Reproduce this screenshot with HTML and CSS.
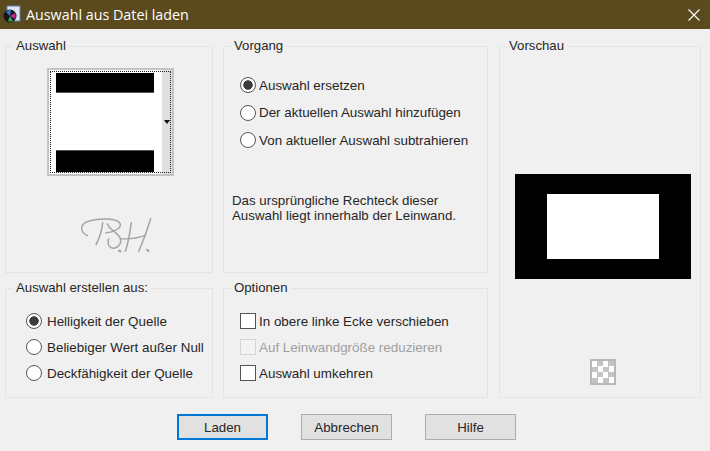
FILE: index.html
```html
<!DOCTYPE html>
<html lang="de">
<head>
<meta charset="utf-8">
<title>Auswahl aus Datei laden</title>
<link rel="stylesheet" href="styles.css">
</head>
<body>
<div class="dialog">
  <header class="titlebar">
    <svg class="app-icon" width="20" height="20" viewBox="0 0 20 20">
      <rect x="5" y="1" width="13" height="15" fill="#dfe8f2" stroke="#5b7fb0"/>
      <circle cx="8" cy="11" r="6.5" fill="#15151c"/>
      <path d="M8 11 L4 7 A6 6 0 0 1 9 5Z" fill="#2f7fd0"/>
      <path d="M8 11 L13 8 A6 6 0 0 1 13 14Z" fill="#c02a8a"/>
      <path d="M8 11 L6 16 A6 6 0 0 0 11 16Z" fill="#2fa84a"/>
    </svg>
    <span class="title-text">Auswahl aus Datei laden</span>
    <svg class="close-icon" width="12" height="12" viewBox="0 0 12 12"><path d="M.5.5l11 11M11.5.5l-11 11" stroke="#fff" stroke-width="1.1" fill="none"/></svg>
  </header>
  <main class="content">
    <div class="columns">
      <fieldset class="group source">
        <legend>Auswahl</legend>
        <div class="picker">
          <div class="picker-image">
            <div class="bar"></div>
            <div class="bar"></div>
          </div>
          <div class="picker-strip"><span class="arrow"></span></div>
        </div>
        <svg class="signature" width="90" height="50" viewBox="0 0 270 150" fill="none" stroke="#a4a4a4" stroke-width="4.4" stroke-linecap="round">
          <path d="M52 95C28 82 28 58 60 50C92 42 140 42 150 58C156 70 136 84 108 86"/>
          <path d="M98 56C96 78 90 100 78 122"/>
          <path d="M112 60C118 78 150 88 152 106C154 124 136 138 122 130C114 124 112 116 116 104"/>
          <path d="M184 56C180 86 176 114 166 142"/>
          <path d="M242 44C232 76 220 110 206 142"/>
          <path d="M150 104C176 106 204 102 226 94"/>
          <path d="M148 140l3 2M232 138l3 3" stroke-width="7"/>
        </svg>
      </fieldset>
      <fieldset class="group action">
        <legend>Vorgang</legend>
        <div class="options options-wide">
          <label class="choice"><span class="radio checked"></span>Auswahl ersetzen</label>
          <label class="choice"><span class="radio"></span>Der aktuellen Auswahl hinzufügen</label>
          <label class="choice"><span class="radio"></span>Von aktueller Auswahl subtrahieren</label>
        </div>
        <p class="note">Das ursprüngliche Rechteck dieser<br>Auswahl liegt innerhalb der Leinwand.</p>
      </fieldset>
      <fieldset class="group preview">
        <legend>Vorschau</legend>
        <div class="preview-canvas"><div class="preview-hole"></div></div>
        <div class="checker"></div>
      </fieldset>
      <fieldset class="group create">
        <legend>Auswahl erstellen aus:</legend>
        <div class="options options-tight">
          <label class="choice"><span class="radio checked"></span>Helligkeit der Quelle</label>
          <label class="choice"><span class="radio"></span>Beliebiger Wert außer Null</label>
          <label class="choice"><span class="radio"></span>Deckfähigkeit der Quelle</label>
        </div>
      </fieldset>
      <fieldset class="group opts">
        <legend>Optionen</legend>
        <div class="options options-boxes">
          <label class="choice"><span class="check"></span>In obere linke Ecke verschieben</label>
          <label class="choice disabled"><span class="check"></span>Auf Leinwandgröße reduzieren</label>
          <label class="choice"><span class="check"></span>Auswahl umkehren</label>
        </div>
      </fieldset>
    </div>
    <div class="buttons">
      <button class="btn default" type="button">Laden</button>
      <button class="btn" type="button">Abbrechen</button>
      <button class="btn" type="button">Hilfe</button>
    </div>
  </main>
</div>
</body>
</html>
```
FILE: styles.css
```css
* { box-sizing: border-box; }
html, body { margin: 0; height: 100%; }
body { background: #f0f0f0; font-family: "Liberation Sans", Arial, sans-serif; font-size: 13.4px; color: #262626; overflow: hidden; }
.dialog { width: 710px; height: 451px; display: flex; flex-direction: column; }
.titlebar { height: 29px; background: #5a4a1d; display: flex; align-items: center; padding: 0 10px 0 2px; color: #fff; }
.app-icon { flex: none; }
.title-text { margin-left: 4px; font-family: "Open Sans", sans-serif; font-size: 14.3px; flex: 1; }
.close-icon { flex: none; }
.content { flex: 1; padding: 9px 8px 0 5px; display: flex; flex-direction: column; }
.columns { display: grid; grid-template-columns: 208px 265px 203px; column-gap: 10px; grid-template-rows: 235px 118px; row-gap: 7px; }
.columns .preview { margin-left: 1px; grid-column: 3; grid-row: 1 / span 2; }
.columns .preview legend { margin-left: 6px; }
.columns .source { grid-column: 1; grid-row: 1; }
.columns .action { grid-column: 2; grid-row: 1; }
.columns .create { grid-column: 1; grid-row: 2; }
.columns .opts { grid-column: 2; grid-row: 2; }
.group { margin: 0; padding: 0; min-width: 0; border: 1px solid #e4e4e4; border-radius: 0; display: flex; flex-direction: column; }
.group legend { margin-left: 7px; padding: 0 3px; font-size: 13.2px; line-height: 16px; color: #262626; }
.picker { margin: 14px 0 0 41px; width: 127px; height: 108px; border: 2px solid #c4c4c4; background: #fff; display: flex; position: relative; flex: none; }
.picker::after { content: ""; position: absolute; inset: 1px; border: 1px dotted #222; }
.picker-image { width: 113px; padding: 3px 0 2px 7px; display: flex; flex-direction: column; justify-content: space-between; }
.bar { width: 98px; height: 20px; background: #000; border-bottom: 1px solid #555; }
.bar + .bar { height: 22px; border-bottom: 0; border-top: 1px solid #555; }
.picker-strip { flex: 1; background: #e0e0e0; display: flex; align-items: flex-start; justify-content: flex-end; padding: 50px 0 0 0; }
.arrow { width: 0; height: 0; border: 3px solid transparent; border-top: 4px solid #111; margin-right: 2px; }
.signature { display: block; margin: 28px 0 0 64px; flex: none; }
.options { display: flex; flex-direction: column; gap: 6px; padding: 15px 0 0 20px; }
.options-wide { padding: 21px 0 0 16px; gap: 7.5px; }
.options-boxes { padding-left: 16px; }
.options-tight .choice { gap: 5px; }
.choice { display: flex; align-items: center; height: 20px; gap: 3px; white-space: nowrap; }
.radio { width: 16px; height: 16px; border-radius: 50%; border: 1.5px solid #555; background: #fff; flex: none; }
.radio.checked { background: radial-gradient(circle, #3c3c3c 0 4.4px, #fff 5px); }
.check { width: 16px; height: 16px; border: 1.5px solid #555; background: #fff; flex: none; }
.disabled { color: #a0a0a0; }
.disabled .check { border-color: #d4d4d4; background: #f3f3f3; }
.note { margin: 43px 0 0 8px; font-size: 13.3px; line-height: 15px; }
.preview-canvas { margin: 120px 0 0 15px; width: 176px; height: 105px; background: #000; display: flex; align-items: center; justify-content: center; flex: none; }
.preview-hole { width: 112px; height: 65px; background: #fff; }
.checker { margin: 80px 0 0 90px; width: 26px; height: 26px; border: 2px solid #b8b8b8; background-color: #fff; background-image: conic-gradient(#c4c4c4 25%, #fff 0 50%, #c4c4c4 0 75%, #fff 0); background-size: 11px 11px; flex: none; }
.buttons { display: flex; gap: 33px; margin: 16px 0 0 172px; }
.btn { width: 91px; height: 26px; padding: 0; border: 1px solid #adadad; background: #e1e1e1; font-family: inherit; font-size: 13.3px; color: #262626; }
.btn.default { border: 2px solid #0078d7; }
```
